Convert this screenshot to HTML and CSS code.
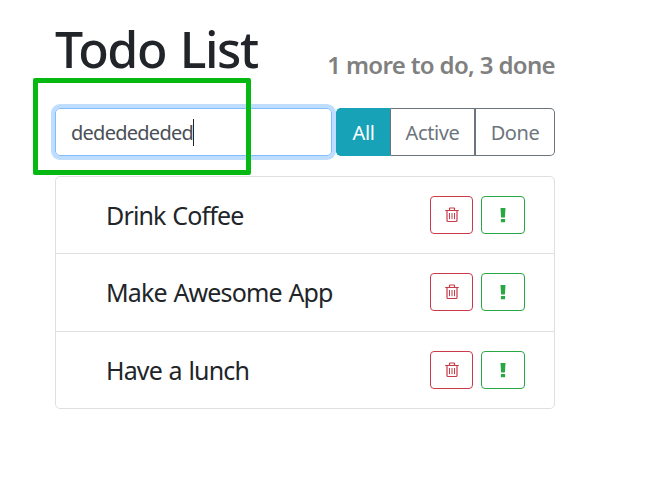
FILE: index.html
```html
<!DOCTYPE html>
<html lang="en">
<head>
<meta charset="utf-8">
<title>Todo List</title>
<link rel="stylesheet" href="styles.css">
</head>
<body>
<svg class="sprite" aria-hidden="true">
  <symbol id="trash" viewBox="0 0 14 16">
    <path d="M.2 3.5H13.800M4.500 3V1.500Q4.500 1 5 1H9Q9.500 1 9.500 1.500V3M2 4V13.500Q2 14.500 3 14.500H11Q12 14.500 12 13.500V4" fill="none" stroke="currentColor" stroke-width="1.200"/>
    <path d="M4.500 6V12.200M7 6V12.200M9.500 6V12.200" stroke="currentColor" stroke-width="1"/>
  </symbol>
  <symbol id="mark" viewBox="0 0 6 15">
    <path d="M.5 0H5.500L4.900 9.500H1.100ZM.9 11H5.100V14.300H.9Z" fill="currentColor"/>
  </symbol>
</svg>
<main class="todo-app">
  <header class="header">
    <h1 class="title">Todo List</h1>
    <h2 class="summary">1 more to do, 3 done</h2>
  </header>
  <div class="toolbar">
    <div class="search"><span>dededededed</span><span class="caret"></span></div>
    <div class="filters">
      <button class="filter active">All</button>
      <button class="filter middle">Active</button>
      <button class="filter last">Done</button>
    </div>
  </div>
  <ul class="list">
    <li class="item"><span class="label">Drink Coffee</span>
      <button class="action delete" aria-label="Delete"><svg class="trash"><use href="#trash"/></svg></button>
      <button class="action important" aria-label="Important"><svg class="mark"><use href="#mark"/></svg></button></li>
    <li class="item"><span class="label">Make Awesome App</span>
      <button class="action delete" aria-label="Delete"><svg class="trash"><use href="#trash"/></svg></button>
      <button class="action important" aria-label="Important"><svg class="mark"><use href="#mark"/></svg></button></li>
    <li class="item"><span class="label">Have a lunch</span>
      <button class="action delete" aria-label="Delete"><svg class="trash"><use href="#trash"/></svg></button>
      <button class="action important" aria-label="Important"><svg class="mark"><use href="#mark"/></svg></button></li>
  </ul>
</main>
<div class="highlight"></div>
</body>
</html>
```
FILE: styles.css
```css
* { box-sizing: border-box; }
body {
  margin: 0;
  background: #fff;
  color: #212529;
  font-family: "Noto Sans", "Open Sans", sans-serif;
  font-size: 20px;
}
.sprite { display: none; }
.todo-app { width: 500px; margin: 0 0 0 55px; padding-top: 19px; }
.header {
  display: flex;
  align-items: flex-start;
  justify-content: space-between;
  height: 61px;
  white-space: nowrap;
}
.title { margin: 0; font-size: 50px; font-weight: 500; line-height: 60px; letter-spacing: -1.4px; word-spacing: 2px; }
.summary { margin: 31px 0 0; font-size: 24px; font-weight: 600; line-height: 30px; color: gray; letter-spacing: -.65px; }
.toolbar { display: flex; gap: 4px; margin-top: 28px; height: 48px; }
.search {
  display: flex;
  align-items: center;
  width: 277px;
  padding: 0 15px;
  border: 1px solid #80bdff;
  border-radius: 5px;
  box-shadow: 0 0 0 4px #bfdeff;
  color: #495057;
  letter-spacing: -.74px;
}
.caret { width: 1px; height: 27px; background: #212529; }
.filters { display: flex; flex: 1; }
.filter {
  padding: 0;
  border: 1px solid #6c757d;
  background: #fff;
  color: #6c757d;
  font: inherit;
  letter-spacing: -.4px;
}
.filter.active { width: 55px; border-color: #17a2b8; border-right-color: #6c757d; border-radius: 5px 0 0 5px; background: #17a2b8; color: #fff; }
.filter.middle { width: 85px; border-left-width: 0; border-right-width: 2px; }
.filter.last { flex: 1; border-left: 0; border-radius: 0 5px 5px 0; }
.list {
  margin: 20px 0 0;
  padding: 0;
  height: 233px;
  display: grid;
  grid-template-rows: 76px 78px 77px;
  border: 1px solid #dfdfdf;
  border-radius: 5px;
  list-style: none;
}
.item { display: flex; align-items: center; padding: 0 29px 0 50px; }
.item + .item { border-top: 1px solid #dfdfdf; }
.item:nth-child(2) { padding-bottom: 1px; }
.label { flex: 1; padding-bottom: 1px; font-size: 25px; letter-spacing: -.85px; word-spacing: 1px; white-space: nowrap; }
.action {
  display: flex;
  align-items: center;
  justify-content: center;
  height: 38px;
  padding: 0;
  border: 1px solid;
  border-radius: 4px;
  background: #fff;
}
.delete { width: 43px; color: #c93b49; }
.important { width: 44px; margin-left: 8px; color: #28a745; }
.trash { width: 14px; height: 16px; }
.mark { width: 6px; height: 15px; }
.highlight {
  position: absolute;
  left: 33px;
  top: 78px;
  width: 218px;
  height: 97px;
  border: 5px solid #06b912;
  border-radius: 2px;
}
```
